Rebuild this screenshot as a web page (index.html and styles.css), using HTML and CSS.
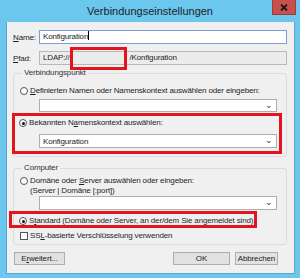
FILE: index.html
```html
<!DOCTYPE html>
<html lang="de">
<head>
<meta charset="utf-8">
<link rel="stylesheet" href="styles.css">
</head>
<body>
<div class="window">
  <div class="titlebar">
    <span></span>
    <span class="title">Verbindungseinstellungen</span>
    <span class="close"><svg width="8" height="7" viewBox="0 0 8 7"><path d="M1 0.5 L7 6.5 M7 0.5 L1 6.5" stroke="#1a1a1a" stroke-width="1.8"/></svg></span>
  </div>
  <div class="client">
    <div class="row">
      <label class="lbl"><u>N</u>ame:</label>
      <div class="input focus">Konfiguration<span class="caret"></span></div>
    </div>
    <div class="row row-pfad">
      <label class="lbl"><u>P</u>fad:</label>
      <div class="input readonly">LDAP://<span class="redact"></span>/Konfiguration<span class="mark"></span></div>
    </div>
    <fieldset class="group g1">
      <legend>Verbindungspunkt</legend>
      <div class="opt first"><span class="radio"></span><span><u>D</u>efinierten Namen oder Namenskontext auswählen oder eingeben:</span></div>
      <div class="combo c1"><span></span><span class="arrow">&#8964;</span></div>
      <div class="hl hl1">
        <div class="opt"><span class="radio on"></span><span>Bekannten N<u>a</u>menskontext auswählen:</span></div>
        <div class="combo c2"><span>Konfiguration</span><span class="arrow">&#8964;</span></div>
      </div>
    </fieldset>
    <fieldset class="group g2">
      <legend>Computer</legend>
      <div class="opt opt2"><span class="radio"></span><span>Domäne oder <u>S</u>erver auswählen oder eingeben:<br>(Server | Domäne [:port])</span></div>
      <div class="combo c3"><span></span><span class="arrow">&#8964;</span></div>
      <div class="hl hl3">
        <div class="opt"><span class="radio on"></span><span>S<u>t</u>andard (Domäne oder Server, an der/dem Sie angemeldet sind)</span></div>
      </div>
      <div class="opt chk"><span class="check"></span><span>SS<u>L</u>-basierte Verschlüsselung verwenden</span></div>
    </fieldset>
    <div class="buttons">
      <span class="btn b-adv">E<u>r</u>weitert...</span>
      <span class="spacer"></span>
      <span class="btn b-ok">OK</span>
      <span class="btn b-cancel">Abbrechen</span>
    </div>
  </div>
</div>
</body>
</html>
```
FILE: styles.css
```css
* { box-sizing: border-box; }
html, body { margin: 0; padding: 0; }
body {
  width: 300px; height: 278px; overflow: hidden;
  background: #6bc7ee;
  font-family: "Liberation Sans", Arial, sans-serif;
  font-size: 8px;
  letter-spacing: -0.15px;
  color: #1e1e1e;
}
u { text-decoration: underline; text-underline-offset: 1px; }
.window { height: 278px; display: flex; flex-direction: column; }
.titlebar {
  height: 22px; flex: none;
  display: grid; grid-template-columns: 1fr auto 1fr; align-items: start;
}
.title { font-size: 11px; letter-spacing: 0; color: #222; line-height: 22px; }
.close {
  justify-self: end; margin-right: 4px;
  width: 24px; height: 15px; background: #c7504d;
  border: 1px solid #a33b38; border-top: none;
  display: flex; align-items: center; justify-content: center;
}
.client {
  flex: 1; margin: 0 5px 4px 6px;
  background: #f0f0f0; border: 1px solid #5aa9cc; border-top: none;
  padding: 8px 7px 0 6px;
  display: flex; flex-direction: column;
}
.row { display: flex; align-items: center; height: 14px; flex: none; }
.row-pfad { margin-top: 7px; }
.lbl { width: 26px; flex: none; }
.input {
  flex: 1; height: 14px; border: 1px solid #7a9fd0; background: #fff;
  line-height: 12px; padding-left: 3px; position: relative;
}
.caret { display: inline-block; width: 1px; height: 9px; background: #000; vertical-align: -1px; }
.readonly { background: #ececec; border-color: #b8b8b8; }
.redact { display: inline-block; width: 60px; }
.mark {
  position: absolute; left: 30px; top: -5px; width: 57px; height: 23px;
  border: 3px solid #e3141e;
}
.group {
  flex: none;
  margin: 3px 0 0 0; padding: 3px 9px 0 6px; min-width: 0;
  border: 1px solid #dcdcdc; border-radius: 3px;
}
.group legend { padding: 0 2px; margin-left: 2px; color: #333; line-height: 10px; height: 10px; }
.g1 { height: 89px; }
.g2 { height: 82px; margin-top: 6px; }
.opt { display: flex; align-items: flex-start; gap: 2px; line-height: 10px; white-space: nowrap; }
.radio {
  width: 8px; height: 8px; border-radius: 50%; border: 1px solid #555;
  background: #fff; flex: none; margin-top: 1px; position: relative;
}
.radio.on::after {
  content: ""; position: absolute; left: 1.5px; top: 1.5px; width: 3px; height: 3px;
  border-radius: 50%; background: #111;
}
.check { width: 8px; height: 8px; border: 1px solid #555; background: #fff; flex: none; margin-top: 1px; }
.opt.first { margin-top: 5px; }
.combo {
  display: flex; justify-content: space-between; align-items: center;
  height: 13px; border: 1px solid #adadad; background: #fff;
  margin-left: 19px; width: 238px; padding: 0 3px; line-height: 11px;
}
.c1 { margin-top: 3px; }
.arrow { font-size: 9px; line-height: 6px; height: 8px; color: #333; }
.hl { border: 3px solid #e3141e; }
.hl1 { width: 270px; margin: 1px 0 0 -8px; padding: 2px 0 3px 4px; }
.hl1 .combo { margin-top: 6px; margin-left: 20px; height: 14px; }
.opt2 { margin-top: 0; }
.c3 { margin-top: 0; height: 14px; }
.hl3 { width: 248px; margin: 1px 0 0 -11px; padding: 2px 0 2px 7px; height: 17px; }
.chk { margin-top: 3px; }
.buttons { display: flex; gap: 5px; margin-top: 7px; padding-right: 9px; }
.spacer { flex: 1; }
.btn {
  height: 13px; border: 1px solid #adadad; background: #e1e1e1;
  display: flex; align-items: center; justify-content: center;
}
.b-adv { width: 51px; margin-left: 1px; }
.b-ok { width: 57px; }
.b-cancel { width: 43px; }
```
